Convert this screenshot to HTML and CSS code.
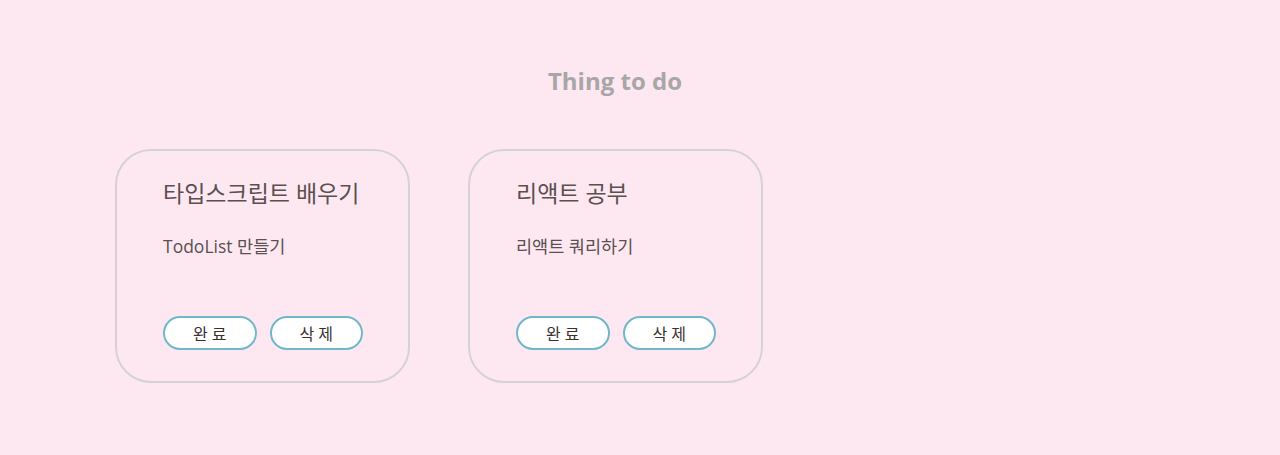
FILE: index.html
```html
<!DOCTYPE html>
<html lang="ko">
<head>
<meta charset="utf-8">
<link rel="stylesheet" href="styles.css">
</head>
<body>
<div class="page">
  <h1 class="title">Thing to do</h1>
  <div class="list">
    <div class="card">
      <h2 class="card-title">타입스크립트 배우기</h2>
      <p class="card-body">TodoList 만들기</p>
      <div class="actions">
        <button class="btn">완 료</button>
        <button class="btn">삭 제</button>
      </div>
    </div>
    <div class="card">
      <h2 class="card-title">리액트 공부</h2>
      <p class="card-body">리액트 쿼리하기</p>
      <div class="actions">
        <button class="btn">완 료</button>
        <button class="btn">삭 제</button>
      </div>
    </div>
  </div>
</div>
</body>
</html>
```

FILE: styles.css
```css
html, body {
  margin: 0;
  padding: 0;
  background: #fde8f1;
  font-family: "Open Sans", "Noto Sans CJK KR", sans-serif;
  color: #5a5050;
}
.page {
  height: 455px;
  box-sizing: border-box;
  padding-top: 62px;
}
.title {
  margin: 0 50px 0 0;
  text-align: center;
  font-size: 24px;
  font-weight: 700;
  color: #a8a6a7;
  line-height: 38px;
}
.list {
  display: flex;
  gap: 58px;
  padding-left: 115px;
  margin-top: 49px;
}
.card {
  width: 295px;
  height: 234px;
  box-sizing: border-box;
  border: 2px solid #d6d2d4;
  border-radius: 36px;
  padding: 25px 45px 0 46px;
  display: flex;
  flex-direction: column;
}
.card-title {
  margin: 0;
  font-size: 23px;
  font-weight: 400;
  line-height: 34px;
}
.card-body {
  margin: 23px 0 0 0;
  font-size: 17.5px;
  line-height: 26px;
}
.actions {
  margin-top: 57px;
  display: flex;
  gap: 13px;
}
.btn {
  width: 94px;
  height: 34px;
  box-sizing: border-box;
  border: 2px solid #70b8c8;
  border-radius: 17px;
  background: #ffffff;
  font-family: "Open Sans", "Noto Sans CJK KR", sans-serif;
  font-size: 16px;
  color: #3a3030;
  padding: 0;
  cursor: pointer;
}
```
